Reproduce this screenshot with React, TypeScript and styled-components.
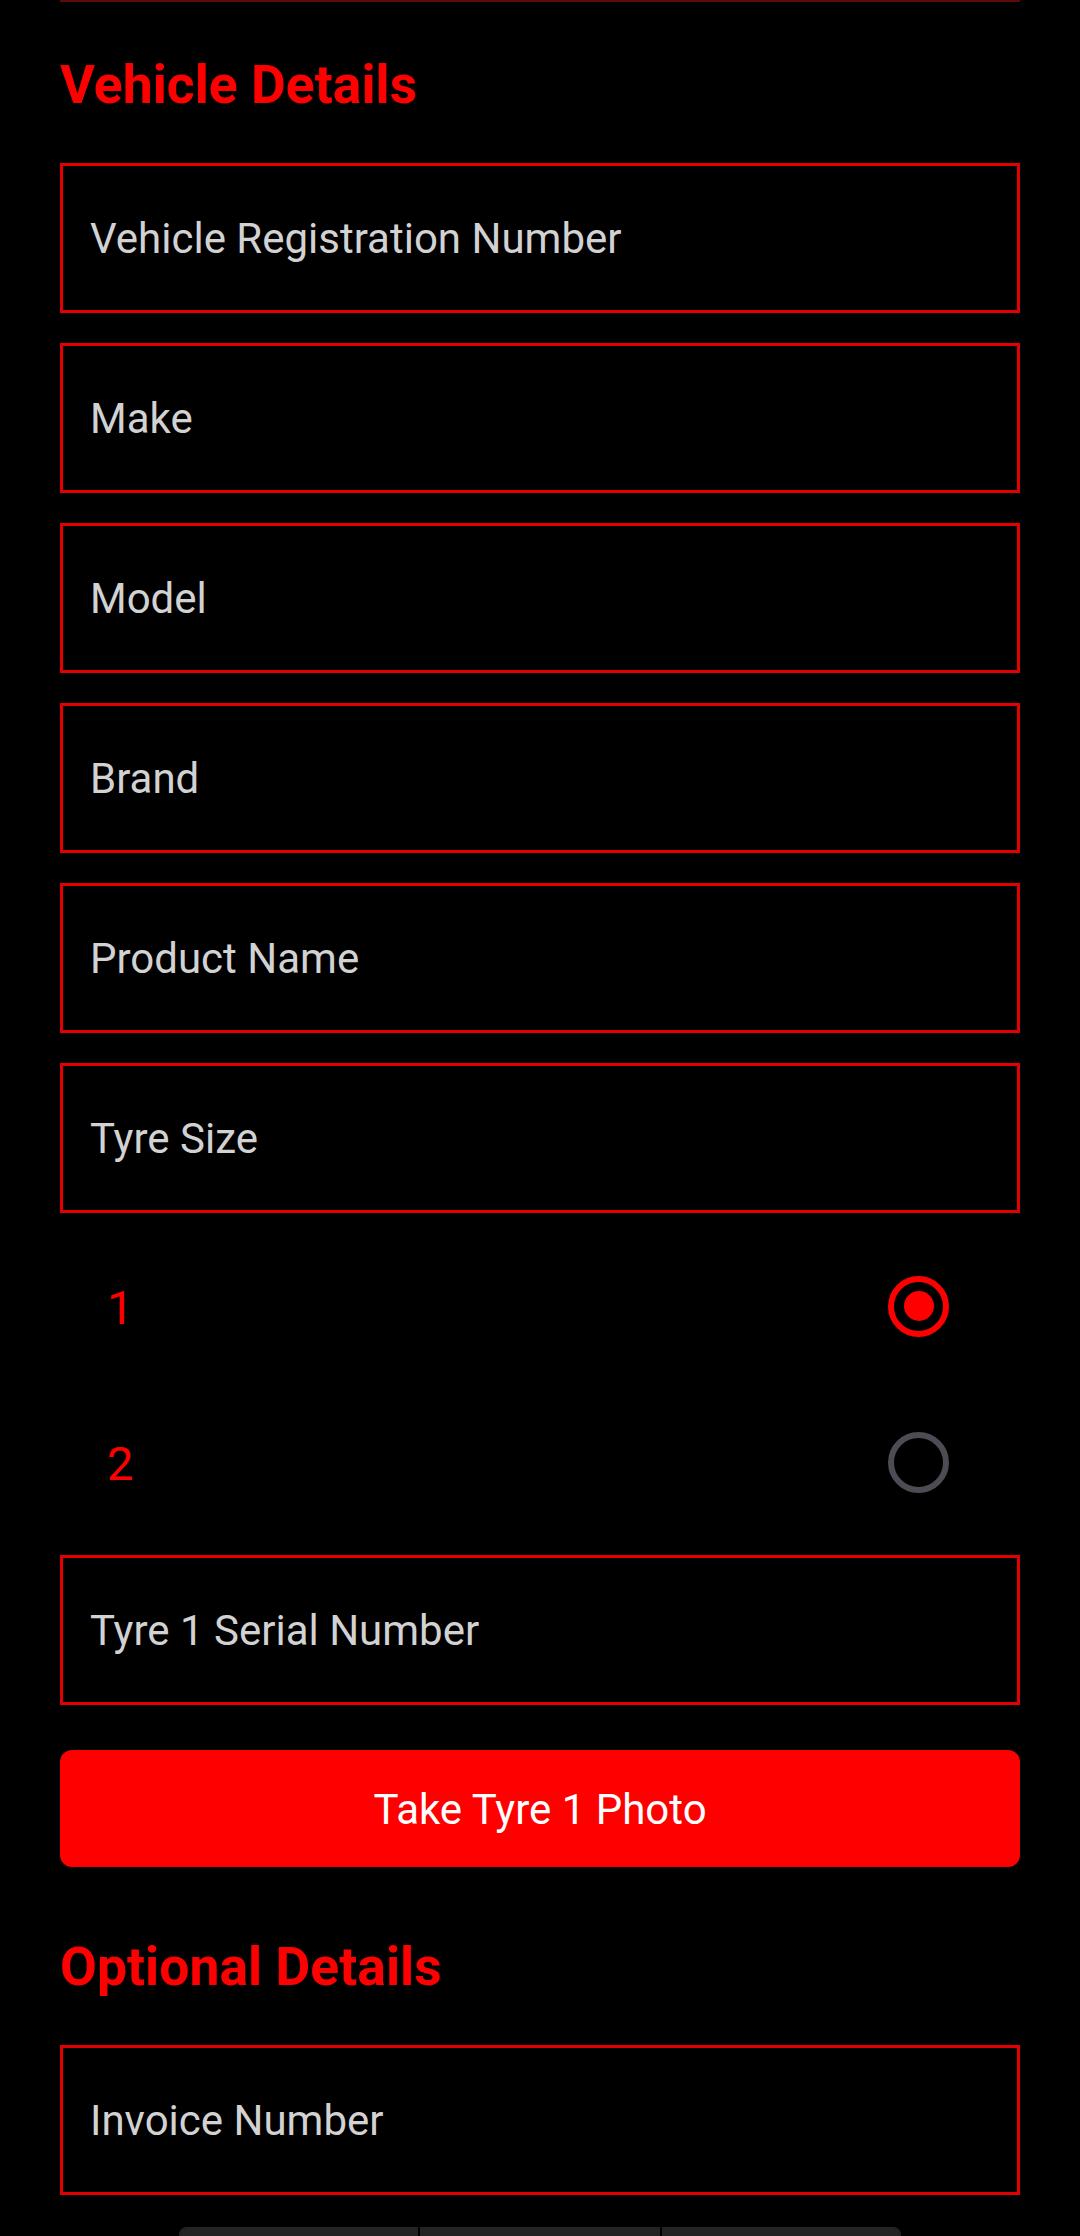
import React from "react";
import styled, { createGlobalStyle } from "styled-components";

const GlobalStyle = createGlobalStyle`
  html, body {
    margin: 0;
    padding: 0;
    background: #000000;
  }
  body {
    font-family: Roboto, "Noto Sans", "Liberation Sans", sans-serif;
    -webkit-font-smoothing: antialiased;
  }
  * { box-sizing: border-box; }
`;

const Page = styled.div`
  width: 1080px;
  height: 2236px;
  overflow: hidden;
  background: #000000;
  padding: 0 60px;
  display: flex;
  flex-direction: column;
`;

const PrevEdge = styled.div`
  height: 2px;
  flex-shrink: 0;
  background: #5e0a0a;
`;

const SectionTitle = styled.h2<{ $top: number }>`
  margin: ${(p) => p.$top}px 0 47px;
  font-size: 53.5px;
  line-height: 62px;
  font-weight: 700;
  color: #ff0000;
  flex-shrink: 0;
`;

const FieldList = styled.div`
  display: flex;
  flex-direction: column;
  gap: 30px;
  flex-shrink: 0;
`;

const Field = styled.div`
  height: 150px;
  flex-shrink: 0;
  border: 3px solid #e40000;
  padding: 2px 27px 0;
  display: flex;
  align-items: center;
  font-size: 42px;
  line-height: 50px;
  color: #d2d2d2;
  font-weight: 400;
`;

const RadioGroup = styled.div`
  margin: 15px 0;
  display: flex;
  flex-direction: column;
  flex-shrink: 0;
`;

const RadioRow = styled.div`
  height: 156px;
  padding: 0 71px 0 47px;
  display: flex;
  align-items: center;
  justify-content: space-between;
`;

const RadioLabel = styled.span`
  font-size: 47px;
  line-height: 56px;
  color: #ff0000;
  padding-top: 4px;
`;

const RadioCircle = styled.span<{ $checked: boolean }>`
  width: 61px;
  height: 61px;
  border-radius: 50%;
  border: 6px solid ${(p) => (p.$checked ? "#ff0000" : "#4c4c54")};
  display: flex;
  align-items: center;
  justify-content: center;

  &::after {
    content: "";
    width: 30px;
    height: 30px;
    border-radius: 50%;
    background: #ff0000;
    display: ${(p) => (p.$checked ? "block" : "none")};
  }
`;

const PhotoButton = styled.button`
  margin-top: 45px;
  height: 117px;
  width: 100%;
  flex-shrink: 0;
  border: none;
  border-radius: 12px;
  background: #ff0000;
  color: #ffffff;
  font-family: Roboto, "Noto Sans", "Liberation Sans", sans-serif;
  font-size: 42px;
  font-weight: 400;
  display: flex;
  align-items: center;
  justify-content: center;
  padding: 2px 0 0;
`;

const BottomTabs = styled.div`
  margin: 32px auto 0;
  width: 722px;
  height: 9px;
  flex-shrink: 0;
  display: flex;
  gap: 2px;
  border-radius: 8px 8px 0 0;
  overflow: hidden;
`;

const TabSegment = styled.div`
  flex: 1;
  background: #232323;
`;

const vehicleFields = [
  "Vehicle Registration Number",
  "Make",
  "Model",
  "Brand",
  "Product Name",
  "Tyre Size",
];

export default function App() {
  const [selected, setSelected] = React.useState(1);
  return (
    <>
      <GlobalStyle />
      <Page>
        <PrevEdge />
        <SectionTitle $top={52}>Vehicle Details</SectionTitle>
        <FieldList>
          {vehicleFields.map((f) => (
            <Field key={f}>{f}</Field>
          ))}
        </FieldList>
        <RadioGroup>
          {[1, 2].map((n) => (
            <RadioRow key={n} onClick={() => setSelected(n)}>
              <RadioLabel>{n}</RadioLabel>
              <RadioCircle $checked={selected === n} />
            </RadioRow>
          ))}
        </RadioGroup>
        <Field>Tyre 1 Serial Number</Field>
        <PhotoButton>Take Tyre 1 Photo</PhotoButton>
        <SectionTitle $top={69}>Optional Details</SectionTitle>
        <Field>Invoice Number</Field>
        <BottomTabs>
          <TabSegment />
          <TabSegment />
          <TabSegment />
        </BottomTabs>
      </Page>
    </>
  );
}
